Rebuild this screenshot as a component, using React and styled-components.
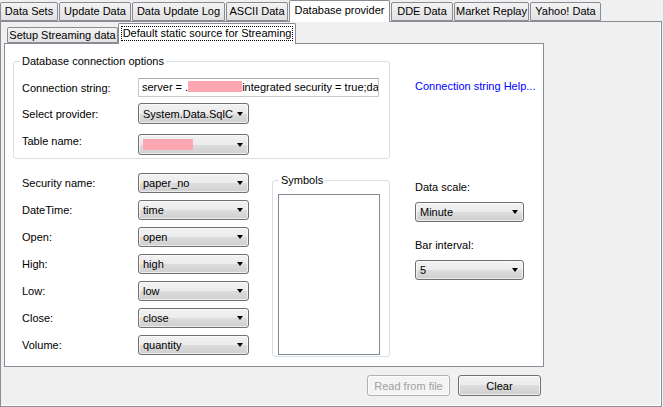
import React from 'react';
import styled, {createGlobalStyle} from "styled-components";

const tabs = [
    {text: 'Data Sets', w: 58},
    {text: 'Update Data', w: 72},
    {text: 'Data Update Log', w: 93},
    {text: 'ASCII Data', w: 62},
    {text: 'Database provider', w: 101, active: true},
    {text: 'DDE Data', w: 62},
    {text: 'Market Replay', w: 75},
    {text: 'Yahoo! Data', w: 71},
];

const fields = [
    {label: 'Security name:', value: 'paper_no'},
    {label: 'DateTime:', value: 'time'},
    {label: 'Open:', value: 'open'},
    {label: 'High:', value: 'high'},
    {label: 'Low:', value: 'low'},
    {label: 'Close:', value: 'close'},
    {label: 'Volume:', value: 'quantity'},
];

function Combo({width, height = 20, children}) {
    return (
        <ComboBox $w={width} $h={height}>
            <ComboText>{children}</ComboText>
            <Arrow/>
        </ComboBox>
    );
}

function App() {
    return (
        <>
            <GlobalStyle/>
            <Window>
                <TabStrip>
                    {tabs.map(t => (
                        <Tab key={t.text} $w={t.w} $active={t.active}>{t.text}</Tab>
                    ))}
                </TabStrip>
                <Panel>
                    <SubTabStrip>
                        <SubTab $w={111}>Setup Streaming data</SubTab>
                        <SubTab $w={178} $active>
                            <Focus>Default static source for Streaming</Focus>
                        </SubTab>
                    </SubTabStrip>
                    <SubPanel>
                        <TopRow>
                            <GroupBox $w={377} $h={98} $top={17} $left={8}>
                                <Caption>Database connection options</Caption>
                                <GroupRow $h={19}>
                                    <Label>Connection string:</Label>
                                    <TextInput>
                                        server = .<Redacted $w={54}/>integrated security = true;dat
                                    </TextInput>
                                </GroupRow>
                                <GroupRow $h={21} $gap={6}>
                                    <Label>Select provider:</Label>
                                    <Combo width={111} height={21}>System.Data.SqlCl</Combo>
                                </GroupRow>
                                <GroupRow $h={21} $gap={10}>
                                    <Label $shift={-4}>Table name:</Label>
                                    <Combo width={111} height={21}><Redacted $w={50}/></Combo>
                                </GroupRow>
                            </GroupBox>
                            <HelpLink>Connection string Help...</HelpLink>
                        </TopRow>
                        <BottomRow>
                            <FieldList>
                                {fields.map(f => (
                                    <FieldRow key={f.label}>
                                        <Label>{f.label}</Label>
                                        <Combo width={111}>{f.value}</Combo>
                                    </FieldRow>
                                ))}
                            </FieldList>
                            <GroupBox $w={118} $h={177} $top={21} $left={23}>
                                <Caption>Symbols</Caption>
                                <ListBox/>
                            </GroupBox>
                            <ScaleColumn>
                                <ColLabel>Data scale:</ColLabel>
                                <Combo width={109}>Minute</Combo>
                                <ColLabel $top={16}>Bar interval:</ColLabel>
                                <Combo width={109}>5</Combo>
                            </ScaleColumn>
                        </BottomRow>
                    </SubPanel>
                    <ButtonRow>
                        <Button disabled>Read from file</Button>
                        <Button>Clear</Button>
                    </ButtonRow>
                </Panel>
            </Window>
        </>
    );
}

const GlobalStyle = createGlobalStyle`
  html, body {
    margin: 0;
    padding: 0;
    background: #f0f0f0;
  }
  body {
    font-family: "Liberation Sans", Arial, sans-serif;
    font-size: 11px;
    color: #000;
  }
`;

const Window = styled.div`
  width: 664px;
  height: 407px;
  box-sizing: border-box;
  border-right: 1px solid #c5d5e8;
  overflow: hidden;
`;

const TabStrip = styled.div`
  display: flex;
  align-items: flex-end;
  gap: 1px;
  height: 21px;
`;

const Tab = styled.div`
  position: relative;
  z-index: ${p => p.$active ? 2 : 0};
  box-sizing: border-box;
  width: ${p => p.$w}px;
  height: ${p => p.$active ? 22 : 19}px;
  margin-bottom: ${p => p.$active ? -1 : 0}px;
  border: 1px solid #898c95;
  border-bottom: ${p => p.$active ? 'none' : '1px solid #898c95'};
  border-radius: 2px 2px 0 0;
  background: ${p => p.$active ? '#ffffff' : 'linear-gradient(#f3f3f3, #e2e2e2)'};
  line-height: ${p => p.$active ? 19 : 17}px;
  text-align: center;
  white-space: nowrap;
`;

const Panel = styled.div`
  box-sizing: border-box;
  width: 662px;
  height: 386px;
  border: 1px solid #898c95;
  background: #f0f0f0;
  padding: 0 0 0 3px;
  box-shadow: inset -1px -1px 0 #ffffff;
`;

const SubTabStrip = styled.div`
  display: flex;
  align-items: flex-end;
  height: 21px;
  padding-left: 3px;
`;

const SubTab = styled.div`
  position: relative;
  z-index: ${p => p.$active ? 2 : 0};
  box-sizing: border-box;
  width: ${p => p.$w}px;
  height: ${p => p.$active ? 21 : 16}px;
  margin-bottom: ${p => p.$active ? -1 : 0}px;
  padding: ${p => p.$active ? '2px 2px 0' : '0'};
  border: 1px solid #898c95;
  border-bottom: ${p => p.$active ? 'none' : '1px solid #898c95'};
  border-radius: 2px 2px 0 0;
  background: ${p => p.$active ? '#ffffff' : 'linear-gradient(#f3f3f3, #e2e2e2)'};
  line-height: 14px;
  text-align: center;
  white-space: nowrap;
`;

const Focus = styled.div`
  border: 1px dotted #000;
  line-height: 13px;
`;

const SubPanel = styled.div`
  position: relative;
  z-index: 1;
  box-sizing: border-box;
  width: 540px;
  height: 324px;
  border: 1px solid #898c95;
  background: #ffffff;
`;

const TopRow = styled.div`
  display: flex;
  align-items: flex-start;
`;

const GroupBox = styled.div`
  position: relative;
  box-sizing: border-box;
  flex: none;
  width: ${p => p.$w}px;
  height: ${p => p.$h}px;
  margin: ${p => p.$top}px 0 0 ${p => p.$left}px;
  padding: 13px 0 0 5px;
  border: 1px solid #d5dfe5;
  border-radius: 3px;
`;

const Caption = styled.div`
  position: absolute;
  top: -8px;
  left: 6px;
  padding: 0 2px;
  background: #ffffff;
  line-height: 14px;
`;

const GroupRow = styled.div`
  display: flex;
  align-items: center;
  height: ${p => p.$h}px;
  margin-top: ${p => p.$gap || 3}px;
  padding-left: 3px;
`;

const Label = styled.div`
  flex: none;
  width: 116px;
  line-height: 14px;
  white-space: nowrap;
  transform: translateY(${p => p.$shift || 0}px);
`;

const TextInput = styled.div`
  box-sizing: border-box;
  width: 241px;
  height: 19px;
  padding: 0 3px;
  border: 1px solid #c6c9d0;
  border-top-color: #abadb3;
  background: #ffffff;
  line-height: 17px;
  white-space: nowrap;
  overflow: hidden;
`;

const Redacted = styled.span`
  display: inline-block;
  width: ${p => p.$w}px;
  height: 11px;
  vertical-align: -1px;
  background: #ffa6b3;
`;

const ComboBox = styled.div`
  flex: none;
  display: flex;
  align-items: center;
  box-sizing: border-box;
  width: ${p => p.$w}px;
  height: ${p => p.$h || 20}px;
  padding: 0 5px 0 4px;
  border: 1px solid #707070;
  border-radius: 3px;
  background: linear-gradient(#f2f2f2 0%, #ebebeb 50%, #dddddd 50%, #cfcfcf 100%);
  box-shadow: inset 0 0 0 1px rgba(255, 255, 255, 0.6);
`;

const ComboText = styled.div`
  flex: 1;
  overflow: hidden;
  white-space: nowrap;
  line-height: 14px;
`;

const Arrow = styled.div`
  flex: none;
  width: 0;
  height: 0;
  margin-left: 4px;
  border-left: 3.5px solid transparent;
  border-right: 3.5px solid transparent;
  border-top: 4px solid #000;
`;

const HelpLink = styled.div`
  margin: 36px 0 0 25px;
  color: #0000ff;
  line-height: 13px;
  white-space: nowrap;
  cursor: pointer;
`;

const BottomRow = styled.div`
  display: flex;
  align-items: flex-start;
`;

const FieldList = styled.div`
  display: flex;
  flex-direction: column;
  gap: 7px;
  margin: 14px 0 0 17px;
`;

const FieldRow = styled.div`
  display: flex;
  align-items: center;
`;

const ListBox = styled.div`
  width: 102px;
  height: 161px;
  box-sizing: border-box;
  border: 1px solid #828790;
  background: #ffffff;
`;

const ScaleColumn = styled.div`
  display: flex;
  flex-direction: column;
  margin: 21px 0 0 25px;
`;

const ColLabel = styled.div`
  line-height: 14px;
  margin: ${p => p.$top || 0}px 0 8px;
`;

const ButtonRow = styled.div`
  display: flex;
  justify-content: flex-end;
  gap: 8px;
  width: 537px;
  margin-top: 8px;
`;

const Button = styled.button`
  box-sizing: border-box;
  width: 83px;
  height: 21px;
  padding: 0;
  font-family: "Liberation Sans", Arial, sans-serif;
  font-size: 11px;
  color: ${p => p.disabled ? '#a0a0a0' : '#000'};
  border: 1px solid ${p => p.disabled ? '#adb2b5' : '#707070'};
  border-radius: 3px;
  background: ${p => p.disabled
    ? '#f4f4f4'
    : 'linear-gradient(#f2f2f2 0%, #ebebeb 50%, #dddddd 50%, #cfcfcf 100%)'};
  box-shadow: inset 0 0 0 1px rgba(255, 255, 255, 0.7);
`;

export default App;
